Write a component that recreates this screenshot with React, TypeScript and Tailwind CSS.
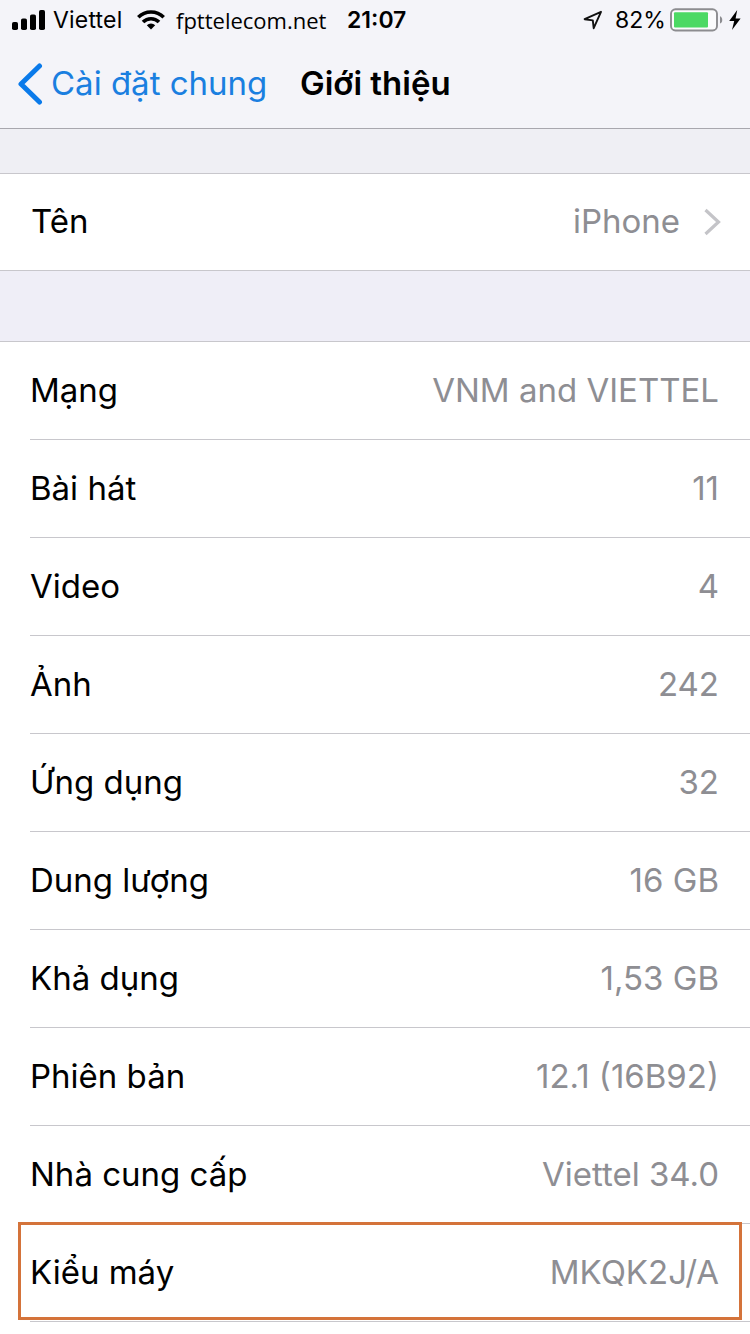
type Item = { label: string; value: string; valueClass?: string; labelClass?: string };

const items: Item[] = [
  { label: "Mạng", value: "VNM and VIETTEL" },
  { label: "Bài hát", value: "11" },
  { label: "Video", value: "4" },
  { label: "Ảnh", value: "242" },
  { label: "Ứng dụng", value: "32" },
  { label: "Dung lượng", value: "16 GB" },
  { label: "Khả dụng", value: "1,53 GB" },
  { label: "Phiên bản", value: "12.1 (16B92)" },
  { label: "Nhà cung cấp", value: "Viettel 34.0" },
  { label: "Kiểu máy", value: "MKQK2J/A" },
];

function SignalIcon() {
  return (
    <svg width="34" height="20" viewBox="0 0 34 20" className="shrink-0">
      <rect x="0" y="12" width="6" height="8" rx="1.8" />
      <rect x="9" y="8.5" width="6" height="11.5" rx="1.8" />
      <rect x="18" y="4.5" width="6" height="15.5" rx="1.8" />
      <rect x="27" y="0" width="6" height="20" rx="1.8" />
    </svg>
  );
}

function WifiIcon() {
  return (
    <svg width="28" height="20" viewBox="0 0 28 20" className="shrink-0" fill="none" stroke="#000" strokeWidth="3.6">
      <path d="M1.3 7.2a18 18 0 0 1 25.4 0" />
      <path d="M6 12a11.3 11.3 0 0 1 16 0" />
      <path d="M14 19.6l-4.2-4.3a6 6 0 0 1 8.4 0z" fill="#000" stroke="none" />
    </svg>
  );
}

function LocationIcon() {
  return (
    <svg width="20" height="20" viewBox="0 0 20 20" className="shrink-0" fill="none" stroke="#111" strokeWidth="1.9" strokeLinejoin="round">
      <path d="M18 1.8L1.6 9.2l8.2 1.2.9 7.8z" />
    </svg>
  );
}

function BatteryIcon() {
  return (
    <svg width="53" height="24" viewBox="0 0 53 24" className="shrink-0">
      <rect x="1" y="1.3" width="46" height="21.2" rx="4.5" fill="#fbfbfd" stroke="#8c8c90" strokeWidth="1.9" />
      <rect x="4" y="4.2" width="34" height="15.4" rx="1" fill="#4cd964" />
      <path d="M50 8.2c3 1 3 6.400 0 7.400z" fill="#8c8c90" />
    </svg>
  );
}

function BoltIcon() {
  return (
    <svg width="12" height="20" viewBox="0 0 12 20" className="shrink-0">
      <path d="M8.200 0L0.200 11h5L3 20l8.600-11.600H6.600z" />
    </svg>
  );
}

function StatusBar() {
  return (
    <div className="flex h-10 items-center pl-3 text-[23px] text-black">
      <SignalIcon />
      <span className="ml-[7px] w-[84px] text-[23px] tracking-[0.2px]">Viettel</span>
      <WifiIcon />
      <span className="ml-[11px] w-[171px] font-['Open_Sans',sans-serif] text-[22px]">fpttelecom.net</span>
      <span className="w-[236px] font-semibold">21:07</span>
      <LocationIcon />
      <span className="ml-3 w-[55px]">82%</span>
      <BatteryIcon />
      <span className="ml-[6px]">
        <BoltIcon />
      </span>
    </div>
  );
}

function NavBar() {
  return (
    <div className="flex h-[88px] items-center pl-[17px] text-[33px]">
      <svg width="26" height="42" viewBox="0 0 26 42" className="shrink-0" fill="none" stroke="#0a7aea" strokeWidth="5" strokeLinecap="round" strokeLinejoin="round">
        <path d="M22.500 3L4 21l18.500 18" />
      </svg>
      <span className="ml-2 w-[249px] whitespace-nowrap text-[#1a7fe0]">Cài đặt chung</span>
      <span className="whitespace-nowrap font-semibold text-black">Giới thiệu</span>
    </div>
  );
}

export default function App() {
  return (
    <div className="relative h-[1334px] w-[750px] overflow-hidden bg-white font-[Inter,sans-serif]">
      <header className="h-[129px] border-b border-[#a8a7ae] bg-[#f4f4f9]">
        <StatusBar />
        <NavBar />
      </header>

      <div className="h-11 bg-[#efeff4]" />

      <div className="flex h-[98px] items-center border-y border-[#c8c7cc] pl-[31px] pr-[29px] text-[33px]">
        <span className="text-black">Tên</span>
        <span className="ml-auto text-[#8e8e93]">iPhone</span>
        <svg width="18" height="28" viewBox="0 0 18 28" className="ml-[23px]" fill="none" stroke="#c4c4c8" strokeWidth="3.200">
          <path d="M2.500 2L15.500 14l-13 12" />
        </svg>
      </div>

      <div className="h-[70px] bg-[#efeef7]" />

      <ul className="border-t border-[#c8c7cc]">
        {items.map((item) => (
          <li key={item.label} className="pl-[30px]">
            <div className="flex h-[98px] items-center justify-between border-b border-[#c8c7cc] pr-[31px] text-[33px] first:h-[98px]">
              <span className="text-black">{item.label}</span>
              <span className="text-[#8e8e93]">{item.value}</span>
            </div>
          </li>
        ))}
      </ul>

      {/* highlight around the model number row */}
      <div className="absolute left-[18px] top-[1222px] h-[98px] w-[724px] border-3 border-[#d4733a]" />
    </div>
  );
}
